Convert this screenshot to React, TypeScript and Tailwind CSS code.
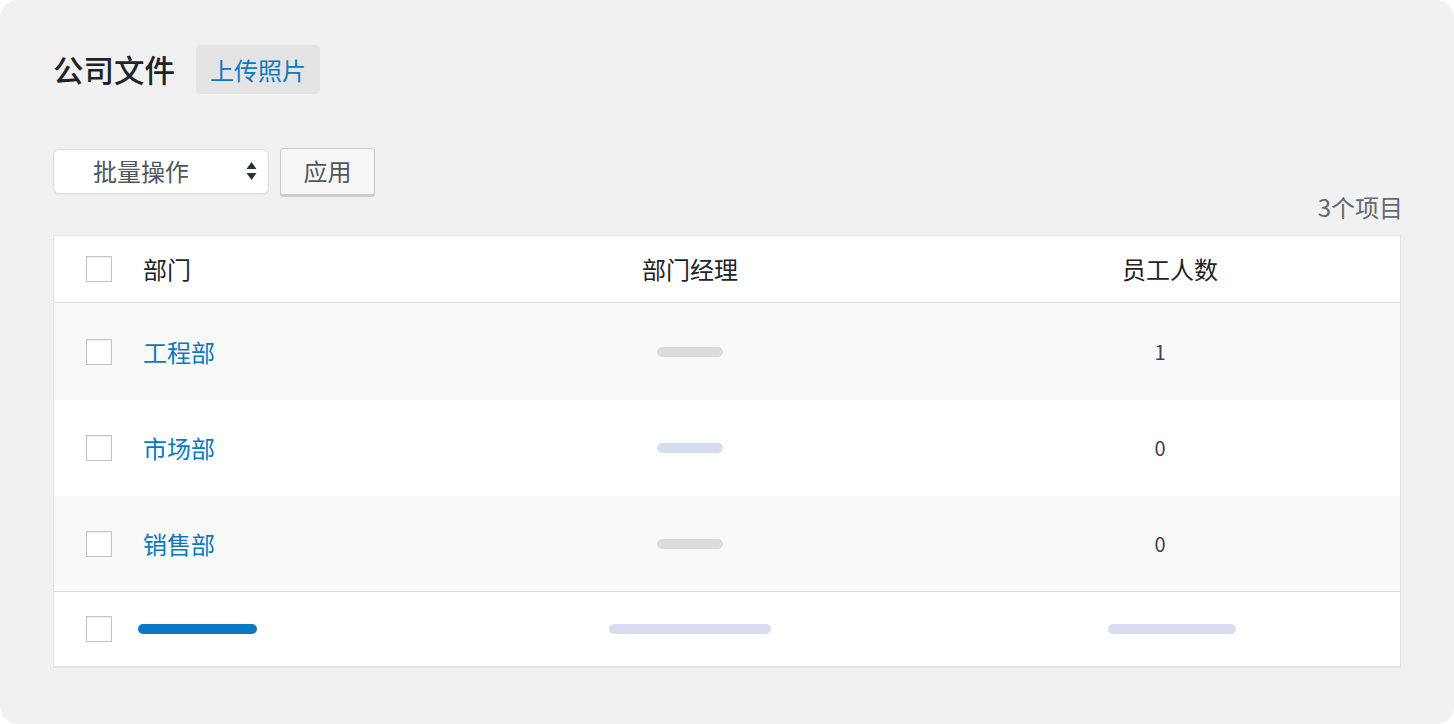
import React from 'react';

type Dept = {
  name: string;
  managerBar: string;
  count: number;
};

const depts: Dept[] = [
  { name: '工程部', managerBar: 'bg-[#dcdcde]', count: 1 },
  { name: '市场部', managerBar: 'bg-[#d9dbee]', count: 0 },
  { name: '销售部', managerBar: 'bg-[#dcdcde]', count: 0 },
];

const font = { fontFamily: '"Noto Sans CJK SC", "Noto Sans", sans-serif' };

function Checkbox() {
  return (
    <div className="h-[26px] w-[26px] border border-[#c3c4c7] bg-white shadow-[inset_0_1px_2px_rgba(0,0,0,0.08)]" />
  );
}

function SelectArrows() {
  return (
    <svg width="11" height="22" viewBox="0 0 11 22" className="text-[#2c3338]">
      <path d="M5.5 2 L10.5 9 H0.5 Z" fill="currentColor" />
      <path d="M5.5 20 L10.5 13 H0.5 Z" fill="currentColor" />
    </svg>
  );
}

export default function App() {
  return (
    <div className="h-[724px] w-[1454px] bg-white" style={font}>
      <div className="h-full rounded-[18px] bg-[#f1f1f1] px-[53px] pt-[45px]">
        {/* Title */}
        <div className="flex h-[49px] items-center gap-[21px]">
          <h1 className="text-[30.5px] font-medium leading-none text-[#1d2327]">公司文件</h1>
          <button className="h-[49px] w-[124px] rounded-[4px] bg-[#e4e4e4] text-[24px] text-[#0a78c2]">
            上传照片
          </button>
        </div>

        {/* Bulk actions */}
        <div className="mt-[53px] flex h-[48px] items-center gap-[11px]">
          <div className="flex h-[45px] w-[216px] items-center justify-between rounded-[6px] border border-[#dcdcde] bg-white pl-[39px] pr-[11px] shadow-[0_1px_1px_rgba(0,0,0,0.04)]">
            <span className="text-[24px] text-[#50575e]">批量操作</span>
            <SelectArrows />
          </div>
          <button className="h-[47px] w-[95px] rounded-[3px] border border-[#cccccc] bg-[#f7f7f7] text-[24px] text-[#50575e] shadow-[0_2px_0_#cccccc]">
            应用
          </button>
        </div>

        {/* Count */}
        <div className="-mr-[2px] h-[24px] text-right text-[24px] leading-[24px] text-[#646970]">3个项目</div>

        {/* Table */}
        <div className="mt-[16px] border border-[#e2e2e2] bg-white shadow-[0_1px_1px_rgba(0,0,0,0.04)]">
          <div className="grid h-[67px] grid-cols-[89px_307px_480px_1fr] items-center border-b border-[#dcdcde] text-[24px] text-[#1d2327]">
            <div className="pl-[32px]">
              <Checkbox />
            </div>
            <div>部门</div>
            <div className="text-center">部门经理</div>
            <div className="pl-[10px] text-center">员工人数</div>
          </div>

          {depts.map((d, i) => (
            <div
              key={d.name}
              className={`grid grid-cols-[89px_307px_480px_1fr] items-center ${
                i % 2 === 0 ? 'bg-[#f9f9f9]' : 'bg-white'
              } ${i === 0 ? 'h-[97px]' : i === 1 ? 'h-[96px]' : 'h-[95px]'}`}
            >
              <div className="pl-[32px]">
                <Checkbox />
              </div>
              <div className="text-[24px] text-[#0a78c2]">{d.name}</div>
              <div className="flex justify-center">
                <div className={`h-[10px] w-[66px] rounded-full ${d.managerBar}`} />
              </div>
              <div className="pr-[10px] text-center text-[20px] text-[#3c434a]">{d.count}</div>
            </div>
          ))}

          <div className="grid h-[75px] grid-cols-[89px_307px_480px_1fr] items-center border-t border-[#dcdcde]">
            <div className="pl-[32px]">
              <Checkbox />
            </div>
            <div className="-ml-[5px]">
              <div className="h-[10px] w-[119px] rounded-full bg-[#0a78c2]" />
            </div>
            <div className="flex justify-center">
              <div className="h-[10px] w-[162px] rounded-full bg-[#d9dbee]" />
            </div>
            <div className="flex justify-center pl-[14px]">
              <div className="h-[10px] w-[128px] rounded-full bg-[#d9dbee]" />
            </div>
          </div>
        </div>
      </div>
    </div>
  );
}
